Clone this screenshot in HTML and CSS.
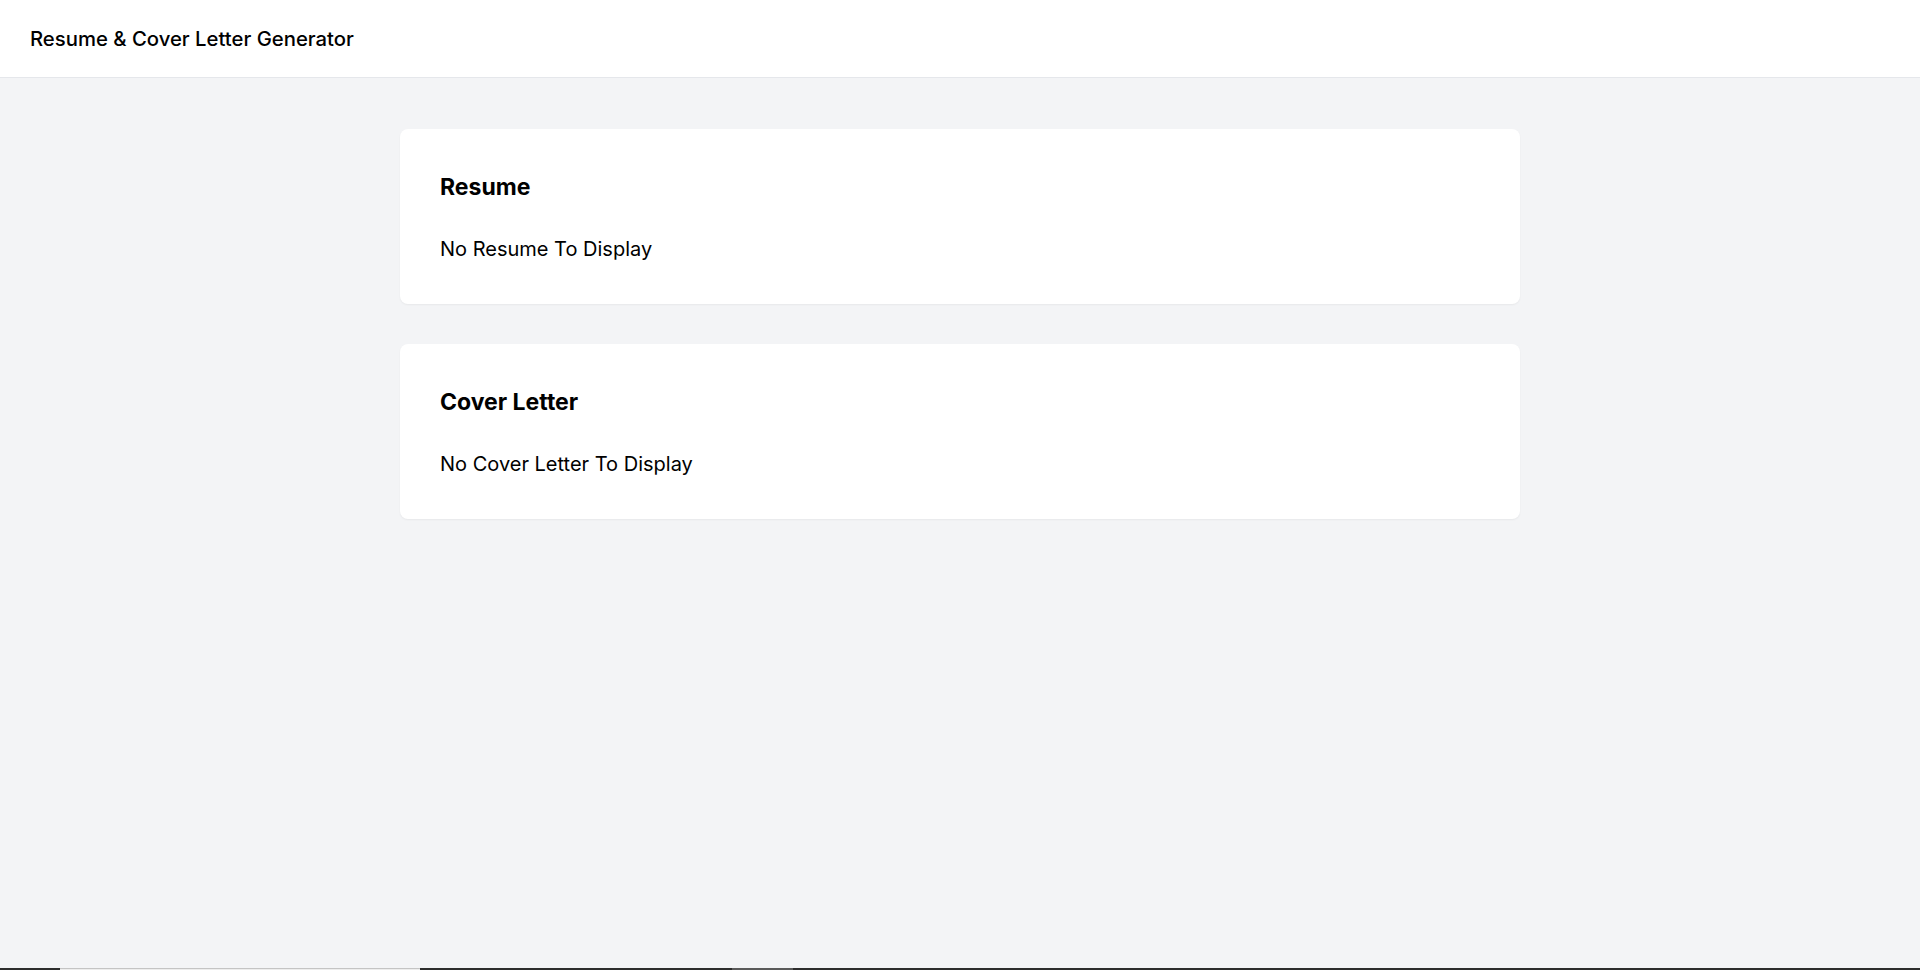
FILE: index.html
```html
<!DOCTYPE html>
<html lang="en">
<head>
<meta charset="utf-8">
<title>Resume &amp; Cover Letter Generator</title>
<link rel="stylesheet" href="styles.css">
</head>
<body>
<div class="page">
  <header class="topbar">
    <h1 class="brand">Resume &amp; Cover Letter Generator</h1>
  </header>
  <main class="content">
    <section class="card">
      <h2 class="card-title">Resume</h2>
      <p class="card-text">No Resume To Display</p>
    </section>
    <section class="card">
      <h2 class="card-title">Cover Letter</h2>
      <p class="card-text">No Cover Letter To Display</p>
    </section>
  </main>
  <div class="strip">
    <span class="seg seg-dark seg-a"></span>
    <span class="seg seg-light seg-b"></span>
    <span class="seg seg-dark seg-c"></span>
    <span class="seg seg-grey seg-d"></span>
    <span class="seg seg-dark seg-e"></span>
  </div>
</div>
</body>
</html>
```
FILE: styles.css
```css
* { box-sizing: border-box; }
html, body { margin: 0; padding: 0; }
body {
  font-family: Inter, "Noto Sans", "Liberation Sans", sans-serif;
  background: #f3f4f6;
  color: #000;
}
.page {
  min-height: 100vh;
  display: flex;
  flex-direction: column;
}
.topbar {
  height: 78px;
  background: #fff;
  border-bottom: 1px solid #e5e7eb;
  display: flex;
  align-items: center;
  padding: 0 30px;
}
.brand {
  margin: 0;
  font-size: 20.3px;
  font-weight: 500;
  line-height: 28px;
  color: #000;
}
.content {
  width: 1120px;
  margin: 0 auto;
  padding-top: 51px;
  display: flex;
  flex-direction: column;
  gap: 40px;
}
.card {
  background: #fff;
  border-radius: 8px;
  box-shadow: 0 1px 2px rgba(0,0,0,0.05);
  padding: 44px 40px 0;
  height: 175px;
}
.card-title {
  margin: 0 0 34px;
  font-size: 23px;
  font-weight: 700;
  line-height: 28px;
}
.card-text {
  margin: 0;
  font-size: 20px;
  font-weight: 400;
  line-height: 28px;
}
.strip {
  margin-top: auto;
  height: 2px;
  display: flex;
}
.seg { display: block; height: 2px; }
.seg-dark { background: #2d2d2d; }
.seg-light { background: #ededed; border-top: 1px solid #c4c4c4; }
.seg-grey { background: #5a5a5a; }
.seg-a { width: 60px; }
.seg-b { width: 360px; }
.seg-c { width: 312px; }
.seg-d { width: 61px; }
.seg-e { flex: 1; }
```
